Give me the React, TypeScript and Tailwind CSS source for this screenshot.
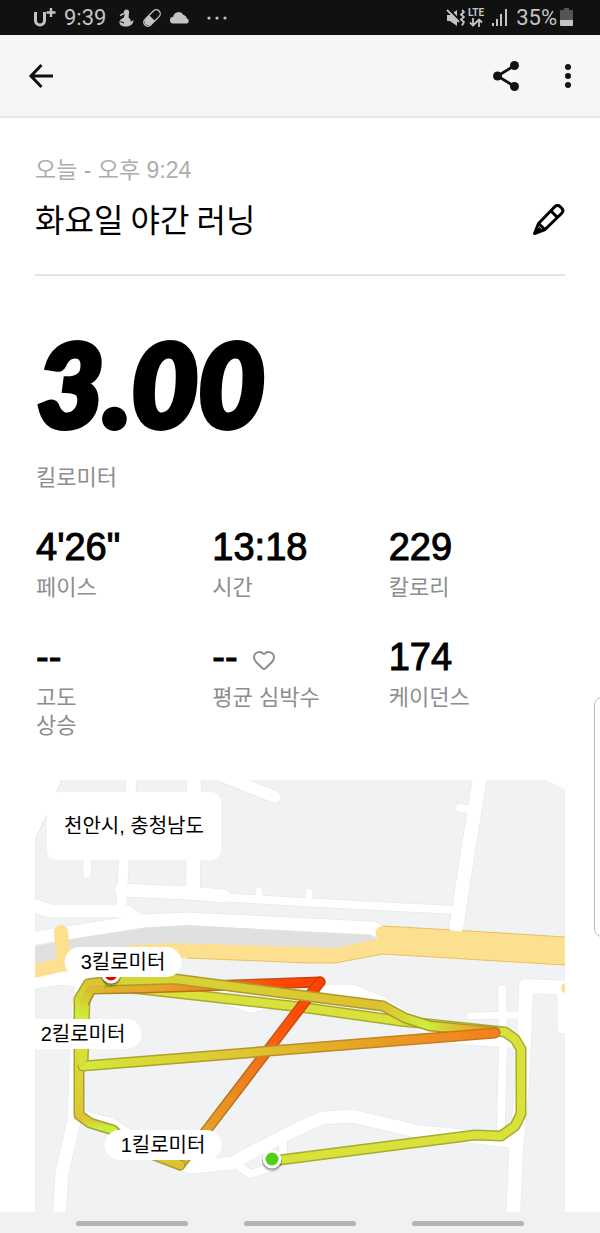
import { Heart } from "lucide-react";

type Point = { x: number; y: number };

// The map is drawn in its own coordinate space: x 35-565, y 779-1211
const MAP = { x: 35, y: 779, width: 530, height: 432 };

function place({ x, y }: Point) {
  return {
    left: `${((x - MAP.x) / MAP.width) * 100}%`,
    top: `${((y - MAP.y) / MAP.height) * 100}%`,
  };
}

const stats = [
  { value: "4'26\"", label: ["페이스"] },
  { value: "13:18", label: ["시간"] },
  { value: "229", label: ["칼로리"] },
  { value: "--", label: ["고도", "상승"] },
  { value: "--", label: ["평균 심박수"], heart: true },
  { value: "174", label: ["케이던스"] },
];

const markers = [
  { label: "3킬로미터", x: 123, y: 961 },
  { label: "2킬로미터", x: 83, y: 1033 },
  { label: "1킬로미터", x: 163, y: 1144 },
];

const roads = [
  { d: "M132 770L130 800L124 858L121 908", w: 10 },
  { d: "M194 770L193 892", w: 14 },
  { d: "M215 772L275 796", w: 12 },
  { d: "M88 845L87 873", w: 8 },
  { d: "M121 889L190 892L224 895", w: 13 },
  { d: "M220 896L300 901L455 909", w: 8 },
  { d: "M259 890V898", w: 7 },
  { d: "M309 891V900", w: 7 },
  { d: "M30 903L50 910L125 910L140 920", w: 13 },
  { d: "M481 770L468 850L455 935", w: 14 },
  { d: "M460 807L472 809", w: 8 },
  { d: "M30 938L85 929L143 920L187 918L310 924L372 927L384 932", w: 13 },
  { d: "M30 982L62 977L82 980L78 1010L76 1060L74 1120L62 1172L59 1220", w: 13 },
  { d: "M76 1113L88 1118L110 1123L150 1150L190 1166L232 1162L295 1129L322 1117L352 1115L420 1131L475 1136L516 1141", w: 13 },
  { d: "M236 1163L250 1173L270 1167", w: 8 },
  { d: "M283 1138V1158", w: 8 },
  { d: "M570 987L526 985L525 1020L522 1083L516 1150L513 1220", w: 14 },
  { d: "M502 988L503 1040L501 1128", w: 8 },
  { d: "M470 1015L520 1014", w: 7 },
  { d: "M563 987V1027", w: 11 },
  { d: "M200 988L250 1005L300 996L330 990L352 990L380 1001L412 1020L450 1036L522 1041", w: 13 },
];

const route = [
  // right hand loop and the way back west
  {
    d: "M272 1160L475 1134L501 1135L515 1125L521 1113V1048L515 1038L505 1031L400 1020L300 1006L140 988L100 984",
    fill: "#d8e23a",
    edge: "#a8ab30",
  },
  { d: "M83 1065L85 996", fill: "#d0ea3a", edge: "#a8ab30" },
  { d: "M85 1000L91 988L145 987L320 981", fill: "url(#north)", edge: "url(#northEdge)" },
  { d: "M320 981L180 1164", fill: "url(#diagonal)", edge: "url(#diagonalEdge)" },
  { d: "M180 1164L128 1144L113 1129L90 1122L79 1114V998L88 983L110 980", fill: "url(#west)", edge: "#a8a030" },
  { d: "M110 980L175 978L383 1005L405 1017L430 1025L495 1031", fill: "url(#top)", edge: "#ab9a2e" },
  { d: "M83 1065L495 1032", fill: "url(#middle)", edge: "url(#middleEdge)" },
  // both laps merge along the west side
  { d: "M82 1062L84 1000L91 988H100", fill: "url(#merge)", edge: "none" },
];

export default function App() {
  return (
    <div className="relative overflow-hidden bg-white font-['Liberation_Sans','Noto_Sans_CJK_KR',sans-serif] text-black">
      <StatusBar />

      <header className="flex h-[83px] items-center justify-between border-b-2 border-[#e6e6e6] bg-[#f6f6f6] pr-5 pl-7">
        <button type="button" aria-label="뒤로">
          <BackIcon />
        </button>
        <div className="flex items-center gap-9">
          <button type="button" aria-label="공유">
            <ShareIcon />
          </button>
          <button type="button" aria-label="더보기">
            <MoreIcon />
          </button>
        </div>
      </header>

      <main className="px-[35px] pt-[38px]">
        <section className="flex items-end justify-between border-b-2 border-[#e4e4e4] pb-[34px]">
          <div>
            <p className="text-[23px] leading-7 text-[#adadad]">오늘 - 오후 9:24</p>
            <h1 className="mt-3 font-['Noto_Sans_CJK_KR',sans-serif] text-[32px] leading-11 font-normal">
              화요일 야간 러닝
            </h1>
          </div>
          <button type="button" aria-label="이름 편집" className="mb-1">
            <PencilIcon />
          </button>
        </section>

        {/* Distance */}
        <section className="pt-12">
          <div className="pl-0.5 font-['Lato',sans-serif] text-[115px] leading-[116px] font-black italic [-webkit-text-stroke:6px_black]">
            3.00
          </div>
          <p className="mt-6 pl-px text-[22px] leading-7 text-[#8d8d8d]">킬로미터</p>
        </section>

        <dl className="mt-8 grid grid-cols-3 gap-y-8 pl-px">
          {stats.map((stat) => (
            <div key={stat.label[0]} className="flex flex-col-reverse justify-end gap-1">
              <dt className="text-[22px] leading-7 text-[#8d8d8d]">
                {stat.label.map((line) => (
                  <span key={line} className="block">
                    {line}
                  </span>
                ))}
              </dt>
              <dd className="flex items-center gap-3.5 text-[38px] leading-[46px] [-webkit-text-stroke:1px_black]">
                {stat.value}
                {stat.heart && <Heart size={24} strokeWidth={2} className="mt-1.5 text-[#8d8d8d]" />}
              </dd>
            </div>
          ))}
        </dl>

        {/* Route map */}
        <section className="relative mt-10 overflow-hidden">
          <RouteMap />
          <div className="absolute top-3 left-3 rounded-[10px] bg-white px-[17px] py-5 text-xl leading-7">
            천안시, 충청남도
          </div>
          {markers.map((marker) => (
            <span
              key={marker.label}
              style={place(marker)}
              className="absolute -translate-x-1/2 -translate-y-1/2 rounded-full bg-white px-4 text-xl leading-[30px] whitespace-nowrap"
            >
              {marker.label}
            </span>
          ))}
        </section>
      </main>

      {/* Edge panel handle */}
      <div className="absolute top-[697px] -right-1 h-60 w-2.5 rounded-l-lg border border-[#bdbdbd] bg-white" />

      <nav className="flex h-[22px] items-center justify-center gap-14 bg-[#f1f1f1]">
        <button type="button" aria-label="최근 앱" className="h-[5px] w-28 rounded-full bg-[#b4b4b4]" />
        <button type="button" aria-label="홈" className="h-[5px] w-28 rounded-full bg-[#b4b4b4]" />
        <button type="button" aria-label="이전" className="h-[5px] w-28 rounded-full bg-[#b4b4b4]" />
      </nav>
    </div>
  );
}

function StatusBar() {
  return (
    <div className="flex h-[35px] items-center justify-between bg-[#111] pr-[27px] pl-[33px] font-['Roboto',sans-serif] text-[22px] text-[#c4c4c4]">
      <div className="flex items-center gap-2">
        <svg width="23" height="20" viewBox="0 0 23 20" fill="none" aria-hidden="true">
          <path d="M2.500 4v8.500a4.500 4.500 0 009 0V4" stroke="currentColor" strokeWidth="3" />
          <path d="M18 0v9M13.500 4.500h9" stroke="currentColor" strokeWidth="2.400" />
        </svg>
        <span>9:39</span>
        <div className="flex items-center gap-2 pl-1">
          <GooseIcon />
          <PillIcon />
          <CloudIcon />
        </div>
        <svg className="ml-2" width="22" height="6" viewBox="0 0 22 6" fill="currentColor" aria-hidden="true">
          <circle cx="3" cy="3" r="1.600" />
          <circle cx="11" cy="3" r="1.600" />
          <circle cx="19" cy="3" r="1.600" />
        </svg>
      </div>
      <div className="flex items-center gap-[3px]">
        <MuteIcon />
        <div className="flex flex-col items-center">
          <span className="text-[10px] leading-[10px] font-bold">LTE</span>
          <svg width="14" height="9" viewBox="0 0 14 9" fill="none" stroke="currentColor" strokeWidth="1.800" aria-hidden="true">
            <path d="M4 0v7M1 4.500l3 3 3-3M10 9V2M7 4.500l3-3 3 3" />
          </svg>
        </div>
        <SignalIcon />
        <span className="pl-1">35%</span>
        <BatteryIcon />
      </div>
    </div>
  );
}

function RouteMap() {
  return (
    <svg
      className="block h-auto w-full"
      viewBox={`${MAP.x} ${MAP.y} ${MAP.width} ${MAP.height}`}
      fill="none"
      role="img"
      aria-label="러닝 경로"
    >
      <defs>
        <linearGradient id="north" gradientUnits="userSpaceOnUse" x1="85" y1="0" x2="320" y2="0">
          <stop offset="0" stopColor="#dcb62f" />
          <stop offset="0.3" stopColor="#e8a428" />
          <stop offset="0.6" stopColor="#f47a15" />
          <stop offset="0.8" stopColor="#ff4a05" />
          <stop offset="1" stopColor="#ff4200" />
        </linearGradient>
        <linearGradient id="northEdge" gradientUnits="userSpaceOnUse" x1="85" y1="0" x2="320" y2="0">
          <stop offset="0" stopColor="#a98c28" />
          <stop offset="0.6" stopColor="#b96418" />
          <stop offset="1" stopColor="#c93a08" />
        </linearGradient>
        <linearGradient id="diagonal" gradientUnits="userSpaceOnUse" x1="320" y1="981" x2="180" y2="1164">
          <stop offset="0" stopColor="#ff4200" />
          <stop offset="0.25" stopColor="#ff5508" />
          <stop offset="0.5" stopColor="#f07d1a" />
          <stop offset="1" stopColor="#dfb72c" />
        </linearGradient>
        <linearGradient id="diagonalEdge" gradientUnits="userSpaceOnUse" x1="320" y1="981" x2="180" y2="1164">
          <stop offset="0" stopColor="#cc3a06" />
          <stop offset="0.5" stopColor="#b96a1e" />
          <stop offset="1" stopColor="#a5912c" />
        </linearGradient>
        <linearGradient id="west" gradientUnits="userSpaceOnUse" x1="0" y1="1164" x2="0" y2="980">
          <stop offset="0" stopColor="#dfc02f" />
          <stop offset="0.2" stopColor="#c8f03c" />
          <stop offset="0.25" stopColor="#dfc432" />
          <stop offset="0.55" stopColor="#d9d836" />
          <stop offset="0.8" stopColor="#ccf03c" />
          <stop offset="1" stopColor="#dcc432" />
        </linearGradient>
        <linearGradient id="merge" gradientUnits="userSpaceOnUse" x1="0" y1="1062" x2="0" y2="988">
          <stop offset="0" stopColor="#d9dc36" />
          <stop offset="0.6" stopColor="#ccf03c" />
          <stop offset="1" stopColor="#dcb830" />
        </linearGradient>
        <linearGradient id="top" gradientUnits="userSpaceOnUse" x1="110" y1="0" x2="495" y2="0">
          <stop offset="0" stopColor="#d6d637" />
          <stop offset="0.3" stopColor="#d9cf33" />
          <stop offset="0.7" stopColor="#dfc02f" />
          <stop offset="0.82" stopColor="#cdef3c" />
          <stop offset="1" stopColor="#f08a22" />
        </linearGradient>
        <linearGradient id="middle" gradientUnits="userSpaceOnUse" x1="83" y1="0" x2="495" y2="0">
          <stop offset="0" stopColor="#d3e83a" />
          <stop offset="0.4" stopColor="#dfc430" />
          <stop offset="0.75" stopColor="#e99a22" />
          <stop offset="1" stopColor="#f5801c" />
        </linearGradient>
        <linearGradient id="middleEdge" gradientUnits="userSpaceOnUse" x1="83" y1="0" x2="495" y2="0">
          <stop offset="0" stopColor="#a8ab30" />
          <stop offset="1" stopColor="#cc741c" />
        </linearGradient>
      </defs>

      <rect x="35" y="779" width="530" height="432" fill="#f0f2f4" />

      <g strokeLinecap="round" strokeLinejoin="round">
        {roads.map((road) => (
          <path key={road.d} d={road.d} stroke="#e2e4e6" strokeWidth={road.w + 1} />
        ))}
        {roads.map((road) => (
          <path key={road.d} d={road.d} stroke="#fff" strokeWidth={road.w} />
        ))}
      </g>
      <path d="M34 778H62L48 812L34 840Z" fill="#fff" stroke="#e2e4e6" />
      <path d="M545 779L565 788V779Z" fill="#fff" />

      {/* Highway */}
      <path
        d="M35 945L85 936L143 927L187 924L310 931L370 934L380 939L335 949L310 949L170 945L70 958L35 964Z"
        fill="#e0e0e0"
      />
      <path
        d="M35 963L70 954L135 944L170 942L310 946L335 947L379 938A7 7 0 01383 925L470 930L565 936V964L383 953L335 962L310 962L187 957L100 963L65 970L35 977Z"
        fill="#fcdf8f"
      />
      <path d="M61 931L64 962" stroke="#fcdf8f" strokeWidth="14" strokeLinecap="round" />
      <path
        d="M383 925L470 930L565 936M565 964L383 953L335 962L310 962L187 957"
        stroke="#eabf5e"
      />
      <path d="M450 927L462 928" stroke="#fff" strokeWidth="5" />
      <circle cx="566" cy="987" r="5" fill="#fcdf8f" />

      {/* Run */}
      <g strokeLinecap="round" strokeLinejoin="round">
        {route.map((leg) => (
          <g key={leg.d}>
            <path d={leg.d} stroke={leg.edge} strokeWidth="11" />
            <path d={leg.d} stroke={leg.fill} strokeWidth="8" />
          </g>
        ))}
      </g>

      <Pin x={111} y={973} color="#f00000" />
      <Pin x={272} y={1158} color="#4fd016" />
    </svg>
  );
}

function Pin({ x, y, color }: Point & { color: string }) {
  return (
    <g>
      <circle cx={x} cy={y + 3} r="10" fill="#000" opacity="0.15" />
      <circle cx={x} cy={y + 1} r="10" fill="#000" opacity="0.3" />
      <circle cx={x} cy={y} r="9.500" fill="#fff" />
      <circle cx={x} cy={y} r="6.500" fill={color} />
    </g>
  );
}

function BackIcon() {
  return (
    <svg width="26" height="26" viewBox="0 0 26 26" fill="none" aria-hidden="true">
      <path d="M13.500 2L3 13l10.500 11M3 13h22" stroke="#111" strokeWidth="3" />
    </svg>
  );
}

function ShareIcon() {
  return (
    <svg width="28" height="32" viewBox="0 0 28 32" fill="#111" aria-hidden="true">
      <path d="M22.500 5.500L5.500 16l17 10.500" fill="none" stroke="#111" strokeWidth="2.800" />
      <circle cx="22.500" cy="5.500" r="4.500" />
      <circle cx="5.500" cy="16" r="4.500" />
      <circle cx="22.500" cy="26.500" r="4.500" />
    </svg>
  );
}

function MoreIcon() {
  return (
    <svg width="24" height="26" viewBox="0 0 24 26" fill="#111" aria-hidden="true">
      <circle cx="12" cy="4" r="3" />
      <circle cx="12" cy="13" r="3" />
      <circle cx="12" cy="22" r="3" />
    </svg>
  );
}

function PencilIcon() {
  return (
    <svg width="32" height="32" viewBox="0 0 32 32" fill="none" stroke="#000" strokeWidth="3" strokeLinejoin="round" aria-hidden="true">
      <path d="M1.500 29.500L5.500 19.500L21.500 3Q24.500 0 27 2.500L29 4.500Q31 7 28.500 9.500L12 25.500Z" />
      <path d="M17.500 6.500l7.500 7.500M5.500 19.500l6.500 6" />
      <path d="M2 29.500l5.500-5.500" />
    </svg>
  );
}

function GooseIcon() {
  return (
    <svg width="16" height="18" viewBox="0 0 16 18" fill="currentColor" aria-hidden="true">
      <circle cx="8.500" cy="3" r="2.600" />
      <path d="M7 4.500h4l-.5 4c2 1 2.500 3 2 4.500l3-2c0 4-3 6.500-7.500 6.500S1 15.500 1.500 12.500C2 10.500 4 9.500 5.500 9z" />
      <path d="M2 6.500L7 4" stroke="currentColor" strokeWidth="1.500" />
      <path d="M2.500 12.500l3.500 1.500" stroke="#111" strokeWidth="1.200" />
    </svg>
  );
}

function PillIcon() {
  return (
    <svg width="20" height="20" viewBox="0 0 20 20" fill="none" aria-hidden="true">
      <rect x="-10" y="-4" width="20" height="8" rx="4" transform="translate(10 10) rotate(-45)" stroke="currentColor" strokeWidth="1.300" />
      <path d="M7.200 7.200l5.600 5.600-3.500 3.500c-3.800 3.800-9.400-1.800-5.600-5.600z" fill="currentColor" />
    </svg>
  );
}

function CloudIcon() {
  return (
    <svg width="20" height="12" viewBox="0 0 20 12" fill="currentColor" aria-hidden="true">
      <path d="M3.500 11.500a3.400 3.400 0 01-.3-6.800A5.500 5.500 0 0113.500 3a4 4 0 013.300 3.500 2.600 2.600 0 01.2 5z" />
    </svg>
  );
}

function MuteIcon() {
  return (
    <svg width="19" height="18" viewBox="0 0 19 18" aria-hidden="true">
      <path d="M1 6h3l7-5v16l-7-5H1z" fill="currentColor" />
      <path d="M3 0l10 11" stroke="#111" strokeWidth="2" />
      <path d="M1 1l12 12" stroke="currentColor" strokeWidth="1.800" />
      <path d="M16 1l2 2-3 2.500 3 2.500-3 2.500 3 2.500-2 3.500" fill="none" stroke="currentColor" strokeWidth="1.800" />
    </svg>
  );
}

function SignalIcon() {
  return (
    <svg className="ml-1" width="18" height="18" viewBox="0 0 18 18" fill="currentColor" aria-hidden="true">
      <path d="M1 14h2v3H1zM5 10h2v7H5zM9 5h2v12H9zM14 0h2v17h-2z" />
    </svg>
  );
}

function BatteryIcon() {
  return (
    <svg width="13" height="19" viewBox="0 0 13 19" aria-hidden="true">
      <path d="M4 0h5v2h3a1 1 0 011 1v9H0V3a1 1 0 011-1h3z" fill="#555" />
      <path d="M0 12h13v5a1 1 0 01-1 1H1a1 1 0 01-1-1z" fill="#c4c4c4" />
    </svg>
  );
}
